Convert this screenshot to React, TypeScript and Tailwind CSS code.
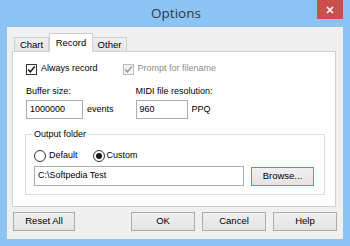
import React from "react";

const font = { fontFamily: '"Liberation Sans", Arial, sans-serif' };

function Check({ checked, disabled }: { checked?: boolean; disabled?: boolean }) {
  const c = disabled ? "#9a9a9a" : "#1a1a1a";
  return (
    <span
      className={`flex h-[11px] w-[11px] items-center justify-center border ${disabled ? "border-[#bcbcbc] bg-[#f4f4f4]" : "border-[#333] bg-white"}`}
    >
      {checked ? (
        <svg width="9" height="9" viewBox="0 0 9 9">
          <path d="M1.2 4.6 L3.4 6.9 L7.8 1.6" fill="none" stroke={c} strokeWidth="1.6" />
        </svg>
      ) : null}
    </span>
  );
}

function Radio({ checked }: { checked?: boolean }) {
  return (
    <span className="flex h-[12px] w-[12px] items-center justify-center rounded-full border border-[#333] bg-white">
      {checked ? <span className="h-[6px] w-[6px] rounded-full bg-[#1a1a1a]" /> : null}
    </span>
  );
}

function Btn({ label, w, focus }: { label: string; w: string; focus?: boolean }) {
  return (
    <div
      className={`flex h-[19px] items-center justify-center border bg-gradient-to-b from-[#f0f0f0] to-[#e3e3e3] text-[9.5px] text-black ${w} ${focus ? "border-[#4c96e0]" : "border-[#acacac]"}`}
    >
      {label}
    </div>
  );
}

export default function App() {
  return (
    <div className="relative h-[246px] w-[350px] bg-[#8cc3f3]" style={font}>
      <div
        className="flex h-[27px] items-center justify-center pl-[2px] text-[13.5px] text-[#2d3a46]"
        style={{ fontFamily: '"Open Sans", "Noto Sans", sans-serif' }}
      >
        Options
      </div>
      <div className="absolute right-[7px] top-0 flex h-[19px] w-[26px] items-center justify-center bg-[#c9504f]">
        <svg width="8" height="8" viewBox="0 0 8 8">
          <path d="M1 1 L7 7 M7 1 L1 7" stroke="#fff" strokeWidth="1.6" />
        </svg>
      </div>

      <div className="mx-[7px] h-[212px] bg-[#f0f0f0] pl-[5px] pt-[6px]">
        {/* tabs */}
        <div className="flex h-[18px] items-end pl-[2px] text-[9.5px] text-black">
          <div className="flex h-[14px] w-[35px] items-center justify-center border border-b-0 border-[#d0d0d0] bg-gradient-to-b from-[#f0f0f0] to-[#e5e5e5] pt-[1px]">
            Chart
          </div>
          <div className="relative z-10 -mb-px flex h-[19px] w-[44px] items-start justify-center border border-b-0 border-[#d0d0d0] bg-white pt-[2px]">
            Record
          </div>
          <div className="flex h-[14px] w-[34px] items-center justify-center border border-b-0 border-l-0 border-[#d0d0d0] bg-gradient-to-b from-[#f0f0f0] to-[#e5e5e5] pt-[1px]">
            Other
          </div>
        </div>

        {/* pane */}
        <div className="h-[156px] w-[324px] border border-[#d0d0d0] bg-white pl-[12px] pt-[11px] text-[9px] text-black">
          <div className="flex h-[12px] items-center pl-[1px]">
            <Check checked />
            <span className="ml-[4px]">Always record</span>
            <span className="ml-[25px]">
              <Check checked disabled />
            </span>
            <span className="ml-[4px] text-[#8d8d8d]">Prompt for filename</span>
          </div>

          <div className="mt-[10px] flex pl-[1px]">
            <div className="flex flex-col">
              <span className="leading-[13px]">Buffer size:</span>
              <div className="mt-[2px] flex items-center">
                <div className="flex h-[19px] w-[57px] items-center border border-[#abadb3] bg-white pl-[3px]">1000000</div>
                <span className="ml-[4px]">events</span>
              </div>
            </div>
            <div className="ml-[22px] flex flex-col">
              <span className="leading-[13px]">MIDI file resolution:</span>
              <div className="mt-[2px] flex items-center">
                <div className="flex h-[19px] w-[52px] items-center border border-[#abadb3] bg-white pl-[3px]">960</div>
                <span className="ml-[4px]">PPQ</span>
              </div>
            </div>
          </div>

          <div className="relative mt-[15px] h-[61px] w-[300px] border border-[#dcdcdc] pl-[8px] pt-[15px]">
            <span className="absolute left-[7px] top-[-7px] bg-white px-px leading-[12px]">Output folder</span>
            <div className="flex h-[12px] items-center">
              <Radio />
              <span className="ml-[3px]">Default</span>
              <span className="ml-[15px]">
                <Radio checked />
              </span>
              <span className="ml-[2px]">Custom</span>
            </div>
            <div className="mt-[4px] flex items-center">
              <div className="flex h-[20px] w-[210px] items-center border border-[#abadb3] bg-white pl-[3px]">
                C:\Softpedia Test
              </div>
              <div className="ml-[7px]">
                <Btn label="Browse..." w="w-[63px]" focus />
              </div>
            </div>
          </div>
        </div>

        {/* bottom buttons */}
        <div className="mt-[5px] flex">
          <div className="ml-[1px]">
            <Btn label="Reset All" w="w-[62px]" />
          </div>
          <div className="ml-[56px] flex gap-[7px]">
            <Btn label="OK" w="w-[64px]" />
            <Btn label="Cancel" w="w-[64px]" />
            <Btn label="Help" w="w-[64px]" />
          </div>
        </div>
      </div>
    </div>
  );
}
